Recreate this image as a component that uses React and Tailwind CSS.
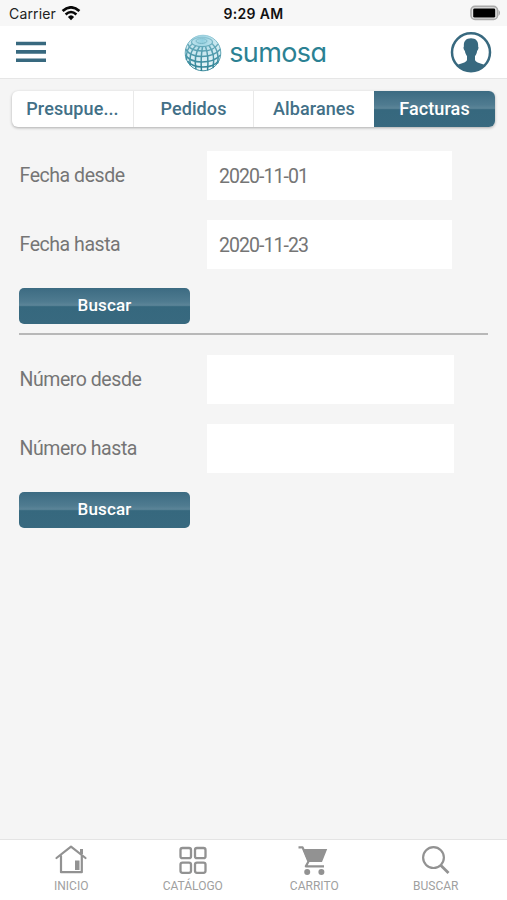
import React from "react";

const SHINE = "bg-[linear-gradient(180deg,#3c6b82_0%,#4f7b90_38%,#5c8598_48%,#36687e_52%,#38697f_100%)]";

function Wifi() {
  return (
    <svg className="ml-[5px] h-[15px] w-[20px]" viewBox="0 0 20 15" fill="none">
      <path d="M1.6 5.1Q10-2.4 18.4 5.1" stroke="#080808" strokeWidth="2.7" />
      <path d="M4.6 8.5Q10 3.6 15.4 8.5" stroke="#080808" strokeWidth="2.5" />
      <path d="M6.9 10.9Q10 7.7 13.1 10.9L10 14.2Z" fill="#080808" />
    </svg>
  );
}

function Battery() {
  return (
    <svg className="h-[16px] w-[32px]" viewBox="0 0 32 16">
      <rect x="1" y="1.4" width="26.5" height="13" rx="4" fill="#e4e4e4" stroke="#aaa" strokeWidth="1.6" />
      <rect x="3.2" y="3.4" width="22" height="9.2" rx="1.4" fill="#000" />
      <path d="M28.6 4.8Q31.2 7.9 28.6 11Z" fill="#999" />
    </svg>
  );
}

function MenuIcon() {
  return (
    <svg className="h-[22px] w-[30px]" viewBox="0 0 30 22" stroke="#38697f" strokeWidth="3.6">
      <path d="M0 2.5H30M0 10.9H30M0 19.3H30" />
    </svg>
  );
}

function Globe() {
  return (
    <svg className="h-[38px] w-[38px]" viewBox="0 0 38 38">
      <defs>
        <radialGradient id="ball" cx="0.48" cy="0.15" r="0.9">
          <stop offset="0" stopColor="#8fcfe0" />
          <stop offset="0.35" stopColor="#c4e5ee" />
          <stop offset="1" stopColor="#f3fafb" />
        </radialGradient>
        <linearGradient id="wire" x1="0" y1="0" x2="0" y2="38" gradientUnits="userSpaceOnUse">
          <stop offset="0" stopColor="#9ccfdd" />
          <stop offset="0.35" stopColor="#5fa5b6" />
          <stop offset="1" stopColor="#287e91" />
        </linearGradient>
      </defs>
      <circle cx="19" cy="19" r="18" fill="url(#ball)" />
      <g fill="none" stroke="url(#wire)" strokeWidth="1.5">
        <circle cx="19" cy="19" r="17.8" strokeWidth="0.9" />
        <ellipse cx="17.5" cy="7" rx="5.5" ry="2.4" strokeWidth="1" />
        <ellipse cx="18" cy="8" rx="10.5" ry="4.7" strokeWidth="1.2" />
        <path d="M3.8 10Q6 17 18 17T34 10" />
        <path d="M1.5 15Q6 22.5 18 22.5T36.5 15" />
        <path d="M1.4 21Q6 28 18 28T36.6 21" />
        <path d="M3.5 27Q8 33 19 33T34.5 27" />
        <path d="M12 11.5Q4 19 6.5 31.5" />
        <path d="M15.5 12.5Q9.5 22 12 35" />
        <path d="M18.5 12.8Q16.5 24 17.5 37" />
        <path d="M21.5 12.5Q25 22 23.5 36.4" />
        <path d="M25 11.5Q31.5 20 29 34" />
        <path d="M28 9.5Q36 17 33.5 29.5" />
        <path d="M8.5 9.5Q1.5 15 2.5 26" />
      </g>
    </svg>
  );
}

function Avatar() {
  return (
    <svg className="h-[42px] w-[42px]" viewBox="0 0 42 42">
      <circle cx="21" cy="21.3" r="19" fill="#fff" stroke="#38697f" strokeWidth="2.5" />
      <path
        d="M21 7.2C15.7 7.2 13.4 10.5 13.9 15.4C13 16 13.8 19.2 14.9 20C15.3 22.6 16.2 24 17 25V29C16 32 10.5 32.2 7 34.2C14.5 42.2 27.5 42.2 35 34.2C31.5 32.2 26 32 25 29V25C26 24 26.8 22.5 27.1 20C28.2 19.2 29 16 28.1 15.4C28.6 10.5 26.3 7.2 21 7.2Z"
        fill="#38697f"
      />
    </svg>
  );
}

function Tab({ children, className = "" }) {
  return (
    <button className={"flex h-full items-center justify-center pb-px text-[18px] font-medium tracking-[0.1px] " + className}>
      {children}
    </button>
  );
}

function Field({ label, value, wide, className = "" }) {
  return (
    <div className={"flex h-[49px] items-center " + className}>
      <label className="w-[188px] pl-[0.5px] text-[19.5px] tracking-[-0.45px] text-[#757575]">{label}</label>
      <div
        className={
          "flex h-full items-center bg-white pl-3 pt-[2px] text-[19.5px] tracking-[-0.95px] text-[#757575] " +
          (wide ? "w-[247px]" : "w-[245px]")
        }
      >
        {value}
      </div>
    </div>
  );
}

function SearchButton({ className = "" }) {
  return (
    <button
      className={
        "flex h-[35.5px] w-[171px] items-center justify-center rounded-[5px] text-[17px] font-medium tracking-[0.15px] text-white " +
        SHINE + " " + className
      }
    >
      Buscar
    </button>
  );
}

function NavItem({ label, children }) {
  return (
    <div className="flex w-[121.5px] flex-col items-center">
      <svg className="h-[34px] w-[34px]" viewBox="0 0 34 34" fill="none" stroke="#929292">
        {children}
      </svg>
      <span className="mt-[1px] text-[12px] leading-[14px] text-[#a0a0a0]">{label}</span>
    </div>
  );
}

export default function App() {
  return (
    <div className="flex h-[900px] w-[507px] flex-col overflow-hidden bg-[#f5f5f5] font-[Roboto,sans-serif]">
      <div className="grid h-[26px] shrink-0 grid-cols-3 items-center bg-[#f7f7f7] font-[Inter,sans-serif]">
        <div className="flex items-center pl-[9px] text-[14px] tracking-[0.15px] text-[#222]">
          Carrier
          <Wifi />
        </div>
        <div className="text-center text-[14px] font-semibold tracking-[0.3px] text-[#111]">9:29 AM</div>
        <div className="flex justify-end pr-[5px]">
          <Battery />
        </div>
      </div>

      <header className="flex h-[53px] shrink-0 items-center justify-between border-b border-[#e6e6e6] bg-white pl-[16px] pr-[15px]">
        <MenuIcon />
        <div className="flex items-center gap-[7px] pl-[14.5px] pt-[2px]">
          <Globe />
          <span className="pb-px font-[Inter,sans-serif] text-[27px] leading-[32px] font-normal tracking-[-0.6px] text-[#2b8193] [font-feature-settings:'cv11']">
            sumosa
          </span>
        </div>
        <Avatar />
      </header>

      <nav className="mx-[12px] mt-[12px] flex h-[36px] shrink-0 overflow-hidden rounded-[6px] bg-white text-[#427087] shadow-[0_1px_3px_rgba(0,0,0,0.3)]">
        <Tab className="w-[122px] border-r border-[#e9e9e9]">Presupue...</Tab>
        <Tab className="w-[120px] border-r border-[#e9e9e9]">Pedidos</Tab>
        <Tab className="w-[120px]">Albaranes</Tab>
        <Tab className={"w-[121px] text-white " + SHINE}>Facturas</Tab>
      </nav>

      <main className="flex flex-1 flex-col pl-[19px] pr-[19px] pt-[24px]">
        <Field label="Fecha desde" value="2020-11-01" />
        <Field label="Fecha hasta" value="2020-11-23" className="mt-[20px]" />
        <SearchButton className="mt-[19px]" />
        <div className="mt-[9.5px] h-[2px] bg-[#b8b8b8]" />
        <Field label="Número desde" wide className="mt-[20px]" />
        <Field label="Número hasta" wide className="mt-[20px]" />
        <SearchButton className="mt-[19px]" />
      </main>

      <footer className="flex h-[61px] shrink-0 justify-center border-t border-[#e4e4e4] bg-white pt-[4px]">
        <NavItem label="INICIO">
          <g strokeWidth="2.2" strokeLinecap="round" strokeLinejoin="round">
            <path d="M2.5 14L17 2.6L31.5 14" />
            <path d="M7 12V28.2H27.8V12" />
            <path d="M27.5 5V10" strokeWidth="3" strokeLinecap="butt" />
          </g>
          <rect x="21" y="16.5" width="4.5" height="9.5" fill="#929292" stroke="none" />
        </NavItem>
        <NavItem label="CATÁLOGO">
          <g strokeWidth="2.3">
            <rect x="4.5" y="4" width="10.5" height="10.2" rx="2" />
            <rect x="19" y="4" width="10.5" height="10.2" rx="2" />
            <rect x="4.5" y="18.6" width="10.5" height="10.2" rx="2" />
            <rect x="19" y="18.6" width="10.5" height="10.2" rx="2" />
          </g>
        </NavItem>
        <NavItem label="CARRITO">
          <path d="M1.5 3.4H5.6L11.5 17.5L8.8 22.4H27" strokeWidth="2.2" strokeLinejoin="round" />
          <path d="M5.6 5H30.2L25 18H11Z" fill="#929292" stroke="none" />
          <circle cx="10.2" cy="28" r="3" fill="#929292" stroke="none" />
          <circle cx="24.4" cy="28" r="3" fill="#929292" stroke="none" />
        </NavItem>
        <NavItem label="BUSCAR">
          <circle cx="14.5" cy="13.6" r="10.4" strokeWidth="2.2" />
          <path d="M21.7 21.2L29.5 29" strokeWidth="2.8" />
        </NavItem>
      </footer>
    </div>
  );
}
